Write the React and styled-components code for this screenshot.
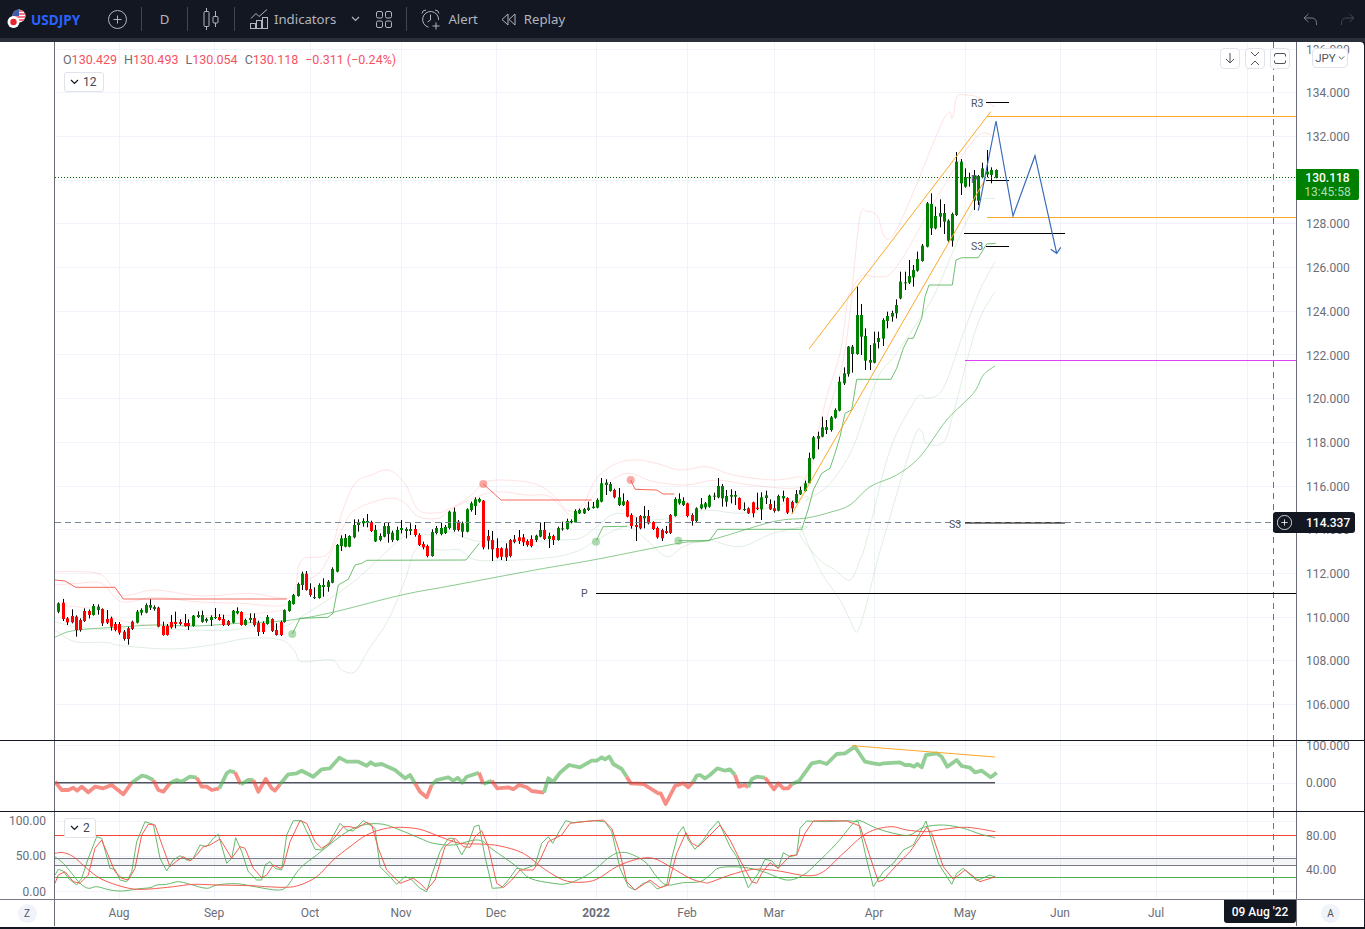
import styled, { createGlobalStyle } from "styled-components";

const UI_FONT = `"Noto Sans", "Liberation Sans", sans-serif`;
const NUM_FONT = `Roboto, "Liberation Sans", sans-serif`;

// helpers: the series below were read off crops, so they keep the crop's origin
const fromCrop = (x0, y0, pts) => pts.map(([x, y]) => [x0 + x / 3, y0 + y / 3]);

const candlesFromCrop = (x0, y0, rows) =>
  rows.map(([x, top, bottom, color, hi, lo]) => ({
    x: Math.round(x0 + x / 3),
    top: y0 + top / 3,
    bottom: y0 + bottom / 3,
    color,
    hi: hi === undefined ? undefined : y0 + hi / 3,
    lo: lo === undefined ? undefined : y0 + lo / 3,
  }));

const linePath = (pts) =>
  pts.map(([x, y], i) => `${i ? "L" : "M"}${x.toFixed(1)} ${y.toFixed(1)}`).join(" ");

const smoothPath = (pts) => {
  let d = `M${pts[0][0].toFixed(1)} ${pts[0][1].toFixed(1)}`;
  for (let i = 0; i < pts.length - 1; i++) {
    const p0 = pts[i - 1] || pts[i];
    const p1 = pts[i];
    const p2 = pts[i + 1];
    const p3 = pts[i + 2] || p2;
    const c1 = [p1[0] + (p2[0] - p0[0]) / 6, p1[1] + (p2[1] - p0[1]) / 6];
    const c2 = [p2[0] - (p3[0] - p1[0]) / 6, p2[1] - (p3[1] - p1[1]) / 6];
    d += ` C${c1[0].toFixed(1)} ${c1[1].toFixed(1)} ${c2[0].toFixed(1)} ${c2[1].toFixed(1)} ${p2[0].toFixed(1)} ${p2[1].toFixed(1)}`;
  }
  return d;
};

const noise = (i) => {
  const s = Math.sin(i * 12.9898) * 43758.5453;
  return s - Math.floor(s);
};

// [x, bodyTop, bodyBottom, colour, wickTop?, wickBottom?]
const candles = [
  ...candlesFromCrop(55, 470, [
    [10, 400, 425, "g"], [24, 398, 447, "r"], [37, 445, 457, "r"], [50, 438, 457, "r", 418, 460], [64, 440, 480, "r", 436, 500],
    [76, 450, 480, "r", 445, 485], [88, 423, 453, "r", 415, 456], [103, 423, 435, "r"], [115, 408, 435, "g", 402, 437], [128, 410, 420, "g", 403, 434],
    [142, 417, 460, "r", 415, 468], [155, 447, 458, "r", 420, 462], [167, 445, 470, "r", 440, 482], [181, 462, 480, "r", 456, 484], [193, 462, 488, "r", 456, 494],
    [206, 485, 507, "r", 480, 512], [220, 475, 507, "r", 470, 524], [232, 455, 477, "r", 452, 480], [245, 425, 458, "g", 420, 460], [259, 420, 428, "g", 415, 436],
    [272, 405, 428, "g", 400, 430], [284, 405, 413, "g", 388, 420], [298, 411, 417, "g", 406, 422], [310, 413, 470, "r", 410, 472], [323, 468, 495, "r", 455, 497],
    [337, 468, 495, "r", 462, 497], [349, 456, 472, "r", 435, 476], [361, 456, 462, "r", 425, 475], [376, 456, 462, "r", 448, 466], [389, 459, 468, "r", 432, 470],
    [400, 459, 468, "r", 448, 480], [415, 437, 468, "g", 435, 470], [428, 435, 441, "g", 424, 444], [440, 435, 456, "g", 422, 458], [454, 447, 453, "g", 443, 458],
    [467, 441, 450, "g", 436, 468], [479, 441, 444, "g", 414, 447], [493, 441, 450, "r", 432, 452], [505, 447, 465, "r", 434, 468], [518, 453, 465, "r", 450, 468],
    [533, 422, 458, "g", 420, 460], [545, 423, 430, "g", 412, 433], [557, 426, 465, "r", 424, 467], [571, 450, 465, "g", 446, 467], [584, 444, 450, "g", 430, 458],
    [598, 444, 465, "r", 430, 470], [610, 459, 486, "r", 452, 498], [623, 459, 486, "r", 454, 492], [637, 441, 462, "g", 435, 464], [650, 447, 483, "r", 445, 486],
    [662, 480, 495, "r", 460, 497], [677, 456, 495, "r", 452, 498], [688, 420, 456, "g", 418, 458], [701, 393, 423, "g", 390, 425], [715, 375, 402, "g", 372, 404],
    [728, 342, 378, "g", 338, 380], [740, 311, 345, "g", 305, 360], [754, 311, 360, "r", 303, 362], [766, 357, 375, "r", 340, 380], [778, 381, 384, "g", 352, 387],
    [793, 345, 384, "g", 340, 386], [805, 345, 351, "g", 325, 380], [818, 335, 351, "g", 330, 365], [832, 297, 338, "g", 292, 340], [845, 225, 305, "g", 222, 307],
    [857, 205, 228, "g", 196, 243], [870, 204, 230, "g", 192, 232], [883, 198, 230, "g", 196, 232], [896, 165, 202, "g", 148, 205], [910, 156, 165, "g", 148, 185],
    [923, 153, 160, "g", 145, 170], [936, 153, 159, "g", 132, 172], [949, 156, 183, "r", 152, 186], [961, 180, 214, "g", 165, 216], [974, 198, 210, "g", 190, 214],
    [988, 168, 200, "g", 158, 202], [1000, 168, 192, "g", 158, 218], [1012, 188, 210, "g", 182, 216], [1026, 180, 210, "g", 170, 212], [1039, 174, 180, "g", 150, 190],
    [1052, 177, 183, "g", 172, 205], [1066, 177, 183, "g", 160, 195], [1079, 177, 195, "r", 165, 200], [1091, 195, 225, "r", 190, 228], [1105, 222, 232, "r", 215, 238],
    [1117, 228, 258, "r", 224, 262], [1130, 186, 258, "g", 178, 260], [1144, 174, 189, "g", 168, 193], [1157, 174, 192, "g", 158, 196], [1170, 171, 189, "g", 165, 192],
    [1183, 125, 174, "g", 122, 178], [1196, 125, 180, "g", 113, 185],
  ]),
  ...candlesFromCrop(440, 460, [
    [54, 185, 210, "r", 180, 214], [67, 190, 215, "g", 185, 232], [80, 148, 215, "g", 145, 217], [92, 130, 150, "g", 125, 155], [105, 118, 138, "g", 112, 165],
    [118, 117, 125, "g", 113, 128], [130, 122, 262, "r", 120, 268], [145, 228, 242, "r", 210, 268], [157, 240, 268, "r", 213, 303], [170, 264, 292, "r", 235, 295],
    [184, 265, 290, "r", 262, 300], [197, 265, 292, "r", 250, 303], [209, 240, 288, "r", 237, 292], [222, 238, 246, "r", 225, 250], [236, 232, 243, "r", 210, 252],
    [248, 232, 247, "r", 222, 258], [262, 243, 255, "r", 238, 260], [274, 237, 258, "r", 226, 262], [287, 227, 240, "g", 224, 246], [301, 210, 230, "g", 186, 232],
    [313, 210, 237, "r", 186, 240], [328, 228, 237, "g", 218, 264], [340, 228, 240, "r", 224, 255], [353, 204, 240, "g", 200, 242], [367, 205, 208, "g", 185, 212],
    [380, 183, 207, "g", 176, 209], [393, 183, 187, "g", 178, 190], [406, 153, 187, "g", 148, 189], [418, 150, 160, "g", 146, 162], [431, 147, 160, "g", 144, 162],
    [445, 143, 150, "g", 125, 153], [458, 140, 144, "g", 126, 146], [470, 120, 143, "g", 115, 145], [483, 70, 125, "g", 54, 127], [497, 68, 75, "g", 58, 105],
    [509, 72, 93, "g", 66, 95], [523, 90, 112, "r", 86, 115], [536, 112, 135, "g", 84, 138], [549, 124, 135, "g", 100, 138], [562, 124, 170, "r", 120, 172],
    [574, 165, 198, "r", 160, 206], [587, 195, 201, "r", 172, 243], [601, 168, 205, "r", 165, 208], [613, 168, 175, "g", 138, 205], [625, 168, 190, "r", 150, 193],
    [640, 186, 207, "r", 184, 210], [652, 204, 232, "r", 200, 236], [665, 210, 235, "r", 206, 243], [679, 213, 219, "r", 198, 222], [691, 165, 219, "r", 162, 222],
    [704, 117, 168, "g", 112, 170], [717, 117, 130, "g", 100, 134], [730, 123, 135, "g", 112, 138], [742, 130, 168, "r", 128, 172], [757, 165, 183, "r", 160, 197],
    [769, 145, 183, "g", 142, 186], [782, 133, 145, "g", 114, 148], [796, 130, 142, "g", 126, 148], [808, 107, 140, "g", 104, 143], [821, 107, 110, "g", 98, 120],
    [835, 78, 112, "g", 54, 115], [847, 78, 115, "g", 72, 140], [859, 108, 125, "g", 90, 140], [873, 105, 110, "g", 88, 130], [886, 105, 110, "g", 93, 135],
    [898, 114, 148, "r", 112, 150], [912, 147, 150, "g", 127, 153], [925, 145, 160, "r", 142, 162], [939, 127, 160, "r", 125, 172], [951, 143, 147, "r", 98, 150],
    [964, 112, 148, "g", 97, 180], [978, 106, 114, "g", 92, 132], [991, 132, 148, "r", 118, 150], [1003, 145, 153, "r", 122, 158], [1015, 108, 152, "g", 104, 154],
    [1028, 108, 115, "g", 92, 125], [1042, 114, 158, "r", 112, 162], [1055, 126, 145, "r", 122, 160], [1068, 102, 128, "g", 90, 130], [1081, 90, 103, "g", 80, 105],
    [1094, 70, 93, "g", 62, 95], [1108, -6, 70, "g", -22, 72],
  ]),
  ...candlesFromCrop(780, 280, [
    [100, 472, 535, "g", 468, 538], [113, 468, 476, "g", 455, 508], [127, 442, 470, "g", 410, 472], [139, 441, 450, "g", 420, 462], [154, 412, 450, "g", 408, 455],
    [166, 390, 413, "g", 385, 416], [178, 305, 392, "g", 290, 394], [193, 280, 310, "g", 262, 315], [205, 200, 282, "g", 198, 290], [217, 200, 222, "g", 195, 278],
    [232, 105, 222, "g", 20, 224], [244, 105, 170, "g", 72, 225], [256, 168, 242, "g", 145, 270], [271, 240, 248, "g", 195, 270], [283, 190, 248, "g", 155, 250],
    [295, 174, 186, "g", 155, 205], [310, 120, 176, "g", 115, 198], [322, 108, 123, "g", 95, 145], [335, 99, 110, "g", 92, 125], [349, 75, 100, "g", 58, 115],
  ]),
  ...candlesFromCrop(780, 90, [
    [361, 575, 625, "g", 545, 628], [375, 577, 578, "g", 545, 600], [388, 558, 578, "g", 510, 582], [400, 540, 562, "g", 525, 590], [412, 507, 542, "g", 485, 545],
    [427, 467, 513, "g", 462, 515], [440, 340, 470, "g", 336, 472], [452, 342, 415, "g", 310, 435], [466, 378, 415, "g", 350, 418], [479, 369, 380, "g", 328, 412],
    [491, 369, 395, "g", 342, 432], [505, 392, 452, "g", 388, 455], [517, 372, 452, "g", 368, 470], [529, 215, 375, "g", 186, 378], [544, 215, 280, "g", 207, 315],
    [556, 262, 290, "g", 235, 293], [568, 262, 264, "g", 248, 290], [582, 258, 332, "g", 240, 360], [595, 258, 332, "g", 255, 345], [607, 235, 262, "g", 218, 265],
    [622, 245, 253, "g", 180, 262], [634, 240, 255, "g", 232, 280], [647, 240, 263, "g", 238, 265],
  ]),
];

const pinkOuter = [
  ...fromCrop(55, 470, [[0, 305], [70, 305], [140, 315], [200, 375], [300, 360], [440, 378], [580, 370], [690, 385], [720, 360], [740, 270], [820, 250], [860, 130], [900, 40], [950, 15], [1000, 0], [1050, 40], [1090, 120], [1150, 128]]),
  ...fromCrop(440, 460, [[20, 150], [60, 130], [100, 100], [130, 70], [180, 60], [280, 70], [340, 105], [380, 150], [425, 140], [470, 55], [530, 10], [590, 0], [650, 10], [720, 30], [800, 20], [880, 45], [1000, 60], [1080, 50]]),
  ...fromCrop(780, 280, [[75, 595], [100, 520], [140, 350], [180, 220], [205, 50]]),
  ...fromCrop(780, 90, [[215, 600], [240, 380], [262, 365], [290, 375], [340, 435], [490, 90], [517, 85], [530, 20], [555, 15], [590, 20], [645, 50]]),
];

const pinkInner = [
  ...fromCrop(55, 470, [[0, 345], [70, 340], [140, 340], [200, 395], [300, 382], [420, 395], [560, 400], [690, 405], [740, 340], [800, 300], [860, 180], [900, 120], [1000, 85], [1050, 100], [1090, 140], [1150, 145]]),
  ...fromCrop(440, 460, [[30, 150], [100, 115], [170, 95], [260, 105], [330, 110], [400, 170], [450, 120], [480, 85], [560, 40], [640, 65], [740, 75], [830, 60], [930, 75], [1060, 85]]),
  ...fromCrop(780, 280, [[75, 603], [110, 510], [150, 380], [190, 240], [215, 60]]),
  ...fromCrop(780, 90, [[220, 590], [250, 555], [290, 560], [350, 530], [490, 290], [590, 140], [645, 140]]),
];

const pinkLow = fromCrop(55, 470, [[0, 405], [60, 410], [140, 420], [190, 450], [300, 465], [420, 440], [560, 435], [690, 420]]);

const paleUpper = [
  ...fromCrop(55, 470, [[0, 455], [60, 470], [140, 478], [250, 475], [400, 480], [530, 480], [600, 465], [680, 470], [740, 440], [890, 340], [1000, 240], [1060, 195], [1150, 195]]),
  ...fromCrop(440, 460, [[30, 215], [80, 235], [130, 245], [250, 245], [350, 240], [420, 235], [470, 200], [530, 160], [620, 180], [720, 170], [800, 150], [900, 160], [1000, 140], [1100, 110]]),
  ...fromCrop(780, 280, [[80, 660], [150, 610], [220, 500], [290, 300], [350, 220], [430, 100]]),
  ...fromCrop(780, 90, [[470, 600], [530, 460], [590, 340], [645, 325]]),
];

const paleMid = [
  ...fromCrop(55, 470, [[0, 480], [60, 515], [150, 517], [200, 527], [350, 537], [470, 525], [580, 505], [680, 510], [720, 545], [740, 575], [830, 570], [860, 600], [900, 605], [940, 540], [1000, 450], [1050, 330], [1085, 235], [1150, 240]]),
  ...fromCrop(440, 460, [[30, 270], [60, 270], [110, 300], [230, 300], [350, 290], [420, 270], [470, 240], [560, 200], [620, 240], [680, 290], [730, 260], [800, 240], [900, 260], [1000, 220], [1100, 200]]),
  [800, 535], [820, 560], [835, 570], [850, 580], [860, 560],
  ...fromCrop(780, 280, [[260, 780], [330, 510], [400, 370], [425, 345], [440, 355], [490, 325], [550, 160], [600, 30], [615, 0]]),
  [995, 262],
];

const paleLow = [
  [800, 525], [820, 570], [840, 600], [850, 620], [857, 632], [865, 610], [875, 570],
  ...fromCrop(780, 280, [[310, 780], [400, 480], [425, 455], [440, 490], [490, 487], [520, 400], [590, 140], [645, 35]]),
];

const maLine = [
  ...fromCrop(55, 470, [[0, 502], [40, 485], [100, 477], [180, 472], [300, 465], [420, 468], [550, 460], [690, 452], [820, 430], [1040, 375], [1200, 345]]),
  [535, 570], [596.7, 559.3], [678.3, 543.3], [710, 540], [773, 521.7], [806.7, 518],
  ...fromCrop(780, 280, [[150, 697], [210, 675], [270, 620], [350, 585], [420, 530], [500, 420], [580, 340], [610, 285], [645, 258]]),
];

const stepSegments = [
  { color: "#f44336", pts: [[55, 580], [65, 581], [75.7, 587.3], [115, 587.3], [123.3, 599], [286.7, 599]] },
  { color: "#4caf50", pts: [[292.3, 634], [300, 618.3], [327.7, 617.3], [333, 613.3], [338.3, 585], [348.3, 579.3], [355, 565], [361.7, 563.3], [366.7, 560.3], [466, 560], [479.3, 543.3]] },
  { color: "#f44336", pts: [[483.3, 484], [501, 500], [591.7, 500]] },
  { color: "#4caf50", pts: [[596.7, 540], [603, 526.7], [627.3, 526.3]] },
  { color: "#f44336", pts: [[630.7, 480], [635, 489.3], [656.7, 490], [663, 494], [674.3, 494]] },
  {
    color: "#4caf50",
    pts: [[678.3, 540.7], [709.3, 540.7], [717.7, 529.3], [801.7, 529.3], [808, 510], [813.3, 490], [821.7, 473.3], [830, 468.3], [835, 453.3], [840, 436.7], [845, 413.3], [851.7, 410], [856.7, 379.3], [891, 379.3], [896.7, 368.3], [903.3, 348.3], [908.3, 338.3], [913.3, 338.3], [921.7, 318.3], [925, 296.7], [929, 285], [952.3, 285], [956, 260], [961.7, 257.7], [978.3, 257.7], [986.7, 244], [995.7, 243.3]],
  },
];

const markers = [
  { x: 292.3, y: 634, color: "#4caf50" },
  { x: 483.3, y: 484, color: "#f44336" },
  { x: 596, y: 541.7, color: "#4caf50" },
  { x: 630.7, y: 480, color: "#f44336" },
  { x: 678.3, y: 540.7, color: "#4caf50" },
];

const rsi = [
  ...fromCrop(0, 735, [[165, 140], [185, 165], [205, 165], [220, 158], [232, 167], [245, 155], [265, 172], [285, 155], [310, 160], [335, 150], [350, 162], [370, 178], [395, 143], [425, 122], [440, 125], [460, 135], [475, 165], [490, 170], [510, 145], [530, 135], [545, 140], [570, 125], [590, 128], [605, 155], [620, 155], [635, 165], [658, 160], [680, 115], [690, 108], [705, 112], [722, 148], [745, 135], [760, 135], [775, 170], [797, 132], [815, 160], [825, 167], [840, 148], [865, 118], [890, 115], [905, 107], [940, 125], [965, 103], [990, 100], [1018, 68], [1040, 80], [1075, 80], [1100, 92], [1112, 82], [1125, 90], [1145, 87], [1185, 105], [1215, 130], [1230, 120], [1245, 145]]),
  ...fromCrop(420, 740, [[0, 155], [20, 172], [35, 135], [50, 120], [85, 112], [100, 122], [113, 113], [127, 128], [140, 110], [177, 98], [190, 132], [215, 122], [232, 145], [265, 142], [280, 148], [297, 135], [320, 142], [335, 153], [372, 158], [385, 115], [400, 125], [420, 98], [447, 75], [480, 82], [515, 62], [530, 62], [545, 52], [555, 58], [568, 50], [580, 72], [605, 87], [620, 110], [632, 130], [670, 132], [715, 160], [722, 160], [737, 192], [765, 138], [790, 130], [805, 142], [820, 125], [830, 107], [840, 105], [855, 115]]),
  ...fromCrop(710, 740, [[0, 105], [22, 85], [45, 92], [60, 88], [75, 105], [87, 140], [105, 135], [115, 142], [125, 118], [140, 110], [165, 113], [192, 148], [205, 130], [220, 145], [235, 145], [245, 133], [268, 122], [305, 70], [330, 65], [350, 72], [380, 42], [405, 40], [435, 20], [465, 65], [490, 70], [510, 73], [520, 70], [570, 67], [585, 75], [600, 75], [612, 80], [622, 72], [635, 82], [648, 45], [680, 40], [695, 50], [712, 80], [740, 60], [755, 78], [780, 83], [795, 97], [815, 92], [842, 112], [860, 98]]),
];

const rsiRedRanges = [[55, 132], [153, 170], [197, 219], [235, 241], [253, 265], [266, 278], [415, 432], [479, 483], [492, 544], [627, 692], [735, 748], [765, 792]];

const isRsiRed = (x) => rsiRedRanges.some(([a, b]) => x >= a && x < b);

const rsiRuns = rsi.reduce((runs, pt, i) => {
  if (i === 0) return runs;
  const prev = rsi[i - 1];
  const red = isRsiRed((prev[0] + pt[0]) / 2);
  const last = runs[runs.length - 1];
  if (last && last.red === red) last.pts.push(pt);
  else runs.push({ red, pts: [prev, pt] });
  return runs;
}, []);

const stochGreenFast = [
  ...fromCrop(0, 735, [[165, 420], [175, 403], [190, 408], [205, 430], [230, 450], [245, 430], [265, 370], [290, 305], [305, 310], [330, 400], [345, 403], [360, 435], [380, 440], [395, 410], [410, 320], [435, 260], [460, 268], [480, 370], [500, 408], [520, 375], [540, 362], [560, 375], [580, 370], [600, 330], [620, 335], [640, 310], [655, 298], [680, 385], [695, 370], [707, 308], [725, 350], [745, 410], [770, 435], [785, 435], [795, 390], [810, 380], [825, 400], [845, 405], [860, 300], [880, 257], [905, 257], [930, 310], [945, 343], [965, 345], [990, 320], [1020, 265], [1040, 285], [1060, 288], [1090, 257], [1110, 270], [1125, 280], [1140, 395], [1170, 425], [1190, 448], [1215, 425], [1230, 430]]),
  ...fromCrop(420, 740, [[0, 445], [20, 455], [35, 405], [60, 335], [85, 295], [100, 295], [125, 345], [145, 310], [163, 260], [177, 255], [195, 350], [217, 445], [245, 443], [265, 420], [290, 385], [310, 388], [345, 375], [365, 310], [385, 290], [398, 310], [420, 270], [437, 242], [460, 248], [520, 242], [555, 245], [575, 275], [600, 385], [625, 440], [645, 450], [670, 430], [690, 425], [712, 447], [740, 435], [755, 355], [775, 280], [790, 260], [805, 300], [825, 328], [850, 300]]),
  ...fromCrop(710, 740, [[0, 270], [25, 243], [60, 320], [80, 350], [115, 443], [145, 400], [165, 358], [185, 362], [205, 385], [220, 338], [240, 350], [260, 345], [270, 265], [290, 243], [350, 245], [410, 242], [445, 245], [470, 360], [490, 440], [520, 395], [550, 370], [580, 330], [610, 315], [648, 243], [685, 370], [725, 433], [740, 400], [760, 385], [800, 422], [840, 405], [856, 412]]),
];

const stochRedFast = [
  ...fromCrop(0, 735, [[165, 445], [175, 420], [195, 410], [220, 440], [240, 445], [265, 420], [285, 340], [305, 315], [320, 350], [345, 410], [365, 430], [385, 435], [405, 400], [425, 300], [445, 268], [465, 270], [490, 340], [510, 395], [530, 378], [550, 365], [570, 378], [590, 360], [610, 335], [630, 330], [660, 312], [680, 345], [695, 370], [720, 335], [735, 340], [760, 400], [785, 428], [800, 420], [820, 390], [840, 400], [850, 395], [870, 320], [900, 257], [920, 265], [945, 320], [965, 340], [990, 325], [1030, 275], [1050, 275], [1070, 280], [1100, 262], [1115, 270], [1135, 340], [1160, 405], [1200, 445], [1240, 430]]),
  ...fromCrop(420, 740, [[0, 430], [20, 450], [45, 420], [75, 320], [105, 295], [130, 320], [150, 322], [165, 290], [185, 272], [205, 320], [230, 430], [250, 443], [275, 420], [300, 390], [340, 390], [360, 360], [385, 305], [425, 285], [450, 250], [490, 245], [550, 240], [575, 265], [600, 340], [620, 425], [645, 450], [690, 420], [720, 443], [745, 435], [770, 340], [798, 278], [815, 310], [835, 320]]),
  ...fromCrop(710, 740, [[0, 285], [30, 255], [60, 300], [90, 360], [125, 425], [140, 430], [155, 400], [180, 368], [205, 385], [240, 347], [260, 345], [285, 280], [310, 243], [350, 242], [410, 243], [450, 258], [480, 350], [505, 425], [520, 420], [560, 375], [600, 335], [650, 262], [665, 280], [700, 380], [730, 418], [765, 390], [810, 425], [856, 410]]),
];

const stochGreenSlow = [
  ...fromCrop(0, 735, [[165, 365], [190, 385], [215, 415], [240, 445], [265, 460], [290, 455], [330, 465], [370, 468], [410, 462], [450, 458], [470, 450], [500, 448], [535, 440], [570, 448], [620, 460], [650, 450], [710, 446], [770, 456], [830, 465], [860, 455], [900, 400], [950, 360], [1000, 320], [1050, 285], [1100, 268], [1150, 268], [1200, 285]]),
  ...fromCrop(420, 740, [[0, 295], [40, 310], [100, 315], [175, 300], [220, 330], [290, 380], [330, 415], [400, 430], [445, 430], [510, 400], [570, 350], [605, 337], [640, 345], [680, 370], [710, 410], [740, 435], [790, 428], [840, 425]]),
  ...fromCrop(710, 740, [[0, 405], [30, 383], [100, 382], [160, 395], [230, 420], [280, 405], [320, 370], [380, 310], [430, 250], [450, 242], [500, 265], [560, 282], [600, 285], [640, 262], [700, 255], [760, 265], [810, 282], [856, 293]]),
];

const stochRedSlow = [
  ...fromCrop(0, 735, [[165, 355], [190, 353], [220, 365], [260, 400], [300, 430], [350, 450], [400, 462], [450, 462], [520, 455], [580, 448], [650, 450], [750, 452], [800, 455], [860, 457], [900, 450], [950, 425], [1000, 375], [1050, 335], [1100, 300], [1150, 282], [1200, 277]]),
  ...fromCrop(420, 740, [[0, 268], [60, 290], [120, 310], [180, 312], [240, 318], [310, 340], [370, 385], [430, 420], [480, 427], [530, 418], [590, 380], [650, 358], [700, 355], [750, 380], [810, 415], [850, 427]]),
  ...fromCrop(710, 740, [[0, 427], [60, 405], [130, 388], [200, 392], [290, 407], [340, 395], [400, 340], [470, 280], [540, 260], [590, 270], [650, 275], [700, 268], [770, 262], [856, 275]]),
];

const gridX = [119, 214, 310, 401, 496, 596, 687, 774, 874, 965, 1060, 1156, 1247];
const prices = [136, 134, 132, 130, 128, 126, 124, 122, 120, 118, 116, 114, 112, 110, 108, 106];
const PRICE_STEP = 43.7;
const priceY = (i) => Math.round(48.5 + i * PRICE_STEP) + 0.5;

const months = [
  { label: "Aug", gap: 64 },
  { label: "Sep", gap: 95 },
  { label: "Oct", gap: 96 },
  { label: "Nov", gap: 91 },
  { label: "Dec", gap: 95 },
  { label: "2022", gap: 100, bold: true },
  { label: "Feb", gap: 91 },
  { label: "Mar", gap: 87 },
  { label: "Apr", gap: 100 },
  { label: "May", gap: 91 },
  { label: "Jun", gap: 95 },
  { label: "Jul", gap: 96 },
];

const GlobalStyle = createGlobalStyle`
  html, body {
    margin: 0;
    padding: 0;
    background: #131722;
  }
  * {
    box-sizing: border-box;
  }
`;

const Page = styled.div`
  width: 1365px;
  height: 929px;
  background: #131722;
  overflow: hidden;
  font-family: ${UI_FONT};
`;

const TopBar = styled.div`
  height: 38px;
  display: flex;
  align-items: center;
  color: #b2b5be;
  font-size: 13.2px;
  padding-right: 10px;
`;

const Strip = styled.div`
  height: 4px;
  background: #2a2e39;
`;

const Symbol = styled.div`
  width: 97px;
  padding-left: 7px;
  display: flex;
  align-items: center;
  gap: 5px;
  color: #2962ff;
  font-weight: 700;
  font-size: 13.6px;
`;

const Slot = styled.div`
  width: ${(p) => p.$w}px;
  height: 24px;
  display: flex;
  align-items: center;
  justify-content: center;
`;

const Divider = styled.div`
  width: 1px;
  height: 24px;
  background: #434651;
  margin-left: ${(p) => p.$ml || 0}px;
`;

const ToolText = styled.div`
  display: flex;
  align-items: center;
  gap: ${(p) => p.$gap}px;
  margin-left: ${(p) => p.$ml}px;
`;

const RightTools = styled.div`
  margin-left: auto;
  display: flex;
  align-items: center;
  gap: 24px;
`;

const ChartArea = styled.div`
  width: 1364px;
  height: 885px;
  background: #fff;
  border-radius: 0 4px 0 0;
  overflow: hidden;
`;

const Row = styled.div`
  position: relative;
  display: grid;
  grid-template-columns: 55px 1241px 68px;
  height: ${(p) => p.$h}px;
  border-top: ${(p) => (p.$line ? `1px solid ${p.$line}` : "none")};
`;

const Gutter = styled.div`
  border-right: 1px solid #6a6d78;
  overflow: hidden;
  text-align: right;
  color: #6a6d78;
  font-family: ${NUM_FONT};
  font-size: 12px;
  padding-right: 8px;
`;

const Axis = styled.div`
  border-left: 1px solid #6a6d78;
  overflow: hidden;
  color: #6a6d78;
  font-family: ${NUM_FONT};
  font-size: 12px;
  padding-left: 9px;
`;

const Ticks = styled.div`
  margin-top: ${(p) => p.$top}px;
`;

const Tick = styled.div`
  height: ${(p) => p.$h}px;
  line-height: ${(p) => p.$h}px;
  white-space: nowrap;
`;

const Pane = styled.div`
  position: relative;
  overflow: hidden;
`;

const ChartSvg = styled.svg`
  display: block;
`;

const SvgLabel = styled.text`
  font-family: ${NUM_FONT};
  font-size: 10.5px;
  fill: #50535e;
`;

const Legend = styled.div`
  position: absolute;
  left: 8px;
  top: 10px;
  display: flex;
  flex-direction: column;
  align-items: flex-start;
  gap: 5px;
  font-family: ${NUM_FONT};
  font-size: 12.5px;
`;

const OhlcLine = styled.div`
  display: flex;
  gap: 7px;
  color: #f7525f;
  white-space: nowrap;
`;

const OhlcKey = styled.span`
  color: #6a6d78;
`;

const Collapse = styled.div`
  height: 20px;
  display: flex;
  align-items: center;
  gap: 4px;
  margin-left: 1px;
  padding: 0 ${(p) => p.$pad}px 0 5px;
  border: 1px solid #e0e3eb;
  border-radius: 3px;
  background: #fff;
  font-family: ${NUM_FONT};
  font-size: 12px;
  color: #434651;
`;

const Collapsed = styled.div`
  position: absolute;
  left: 8px;
  top: 6px;
`;

const PaneTools = styled.div`
  position: absolute;
  top: 6px;
  right: 6px;
  display: flex;
  gap: 5px;
`;

const PaneButton = styled.div`
  width: 20px;
  height: 21px;
  display: flex;
  align-items: center;
  justify-content: center;
  border: 1px solid #e0e3eb;
  border-radius: 4px;
  background: #fff;
`;

const UnitButton = styled.div`
  position: absolute;
  top: 6px;
  left: 1312px;
  width: 36px;
  height: 20px;
  display: flex;
  align-items: center;
  justify-content: center;
  gap: 2px;
  background: #fff;
  border: 1px solid #e0e3eb;
  border-radius: 4px;
  font-family: ${NUM_FONT};
  font-size: 11.5px;
  color: #50535e;
`;

const LastPriceTag = styled.div`
  position: absolute;
  left: 1296px;
  top: 127px;
  width: 63px;
  height: 31px;
  background: #008000;
  border-radius: 0 2px 2px 0;
  display: flex;
  flex-direction: column;
  align-items: center;
  justify-content: center;
  font-family: ${NUM_FONT};
  font-size: 12px;
  line-height: 14px;
  color: #fff;
  font-weight: 500;
`;

const Countdown = styled.span`
  color: #b4dcb4;
  font-weight: 400;
`;

const CursorTag = styled.div`
  position: absolute;
  left: 1273px;
  top: 470px;
  height: 21px;
  display: flex;
  align-items: center;
  background: #131722;
  border-radius: 3px;
  color: #fff;
  font-family: ${NUM_FONT};
  font-size: 12px;
  font-weight: 500;
`;

const CursorPlus = styled.div`
  width: 23px;
  display: flex;
  justify-content: center;
`;

const CursorPrice = styled.div`
  width: 59px;
  padding-left: 10px;
`;

const TimeTrack = styled.div`
  position: relative;
  display: flex;
  align-items: center;
  height: 26px;
  font-family: ${NUM_FONT};
  font-size: 12px;
  color: #6a6d78;
`;

const TimeTick = styled.div`
  width: 0;
  margin-left: ${(p) => p.$gap}px;
  display: flex;
  justify-content: center;
  white-space: nowrap;
  font-weight: ${(p) => (p.$bold ? 700 : 400)};
`;

const DateTag = styled.div`
  position: absolute;
  right: 0;
  top: 0;
  width: 72px;
  height: 23px;
  display: flex;
  align-items: center;
  justify-content: center;
  background: #131722;
  border-radius: 0 0 3px 3px;
  color: #fff;
  font-weight: 500;
`;

const CornerCell = styled.div`
  display: flex;
  align-items: center;
  justify-content: center;
  height: 26px;
  border-right: ${(p) => (p.$side === "left" ? "1px solid #6a6d78" : "none")};
  border-left: ${(p) => (p.$side === "right" ? "1px solid #6a6d78" : "none")};
`;

const RoundLetter = styled.div`
  width: 19px;
  height: 19px;
  border-radius: 50%;
  background: #f0f3fa;
  color: #50535e;
  display: flex;
  align-items: center;
  justify-content: center;
  font-family: ${NUM_FONT};
  font-size: 10px;
`;

const LogoIcon = () => (
  <svg width="19" height="20" viewBox="0 0 19 20">
    <defs>
      <clipPath id="flag">
        <circle cx="12" cy="7" r="6.5" />
      </clipPath>
    </defs>
    <g clipPath="url(#flag)">
      <rect x="5" y="0" width="15" height="14" fill="#fff" />
      <path d="M5 2h15M5 5h15M5 8h15M5 11h15" stroke="#f0455a" strokeWidth="1.4" />
      <rect x="5" y="0" width="7" height="7" fill="#3c5ea8" />
    </g>
    <circle cx="6.5" cy="13" r="6" fill="#fff" />
    <circle cx="6.5" cy="13" r="3.2" fill="#e8252f" />
  </svg>
);

const PlusCircleIcon = ({ size = 19, color = "#b2b5be" }) => (
  <svg width={size} height={size} viewBox="0 0 19 19" fill="none" stroke={color}>
    <circle cx="9.5" cy="9.5" r="9" />
    <path d="M9.5 5.5v8M5.5 9.5h8" />
  </svg>
);

const CandlesIcon = () => (
  <svg width="16" height="22" viewBox="0 0 16 22" fill="none" stroke="#b2b5be">
    <path d="M3.5 0v3M3.5 19v3M12.5 3v5M12.5 15v4" />
    <rect x="1" y="3.5" width="5" height="15" rx="1" />
    <rect x="10" y="8.5" width="5" height="6.5" rx="1" />
  </svg>
);

const IndicatorsIcon = () => (
  <svg width="19" height="20" viewBox="0 0 19 20" fill="none" stroke="#b2b5be">
    <path d="M1 9.5l5-5 3 3 8-7" />
    <rect x="0.5" y="14.5" width="5" height="5" />
    <rect x="6.5" y="11.5" width="5" height="8" />
    <rect x="12.5" y="8.5" width="5" height="11" />
  </svg>
);

const ChevronIcon = ({ color = "#b2b5be", w = 9 }) => (
  <svg width={w} height="6" viewBox="0 0 9 6" fill="none" stroke={color} strokeWidth="1.2">
    <path d="M1 1l3.5 3.5L8 1" />
  </svg>
);

const LayoutIcon = () => (
  <svg width="16" height="17" viewBox="0 0 16 17" fill="none" stroke="#b2b5be">
    <rect x="0.5" y="0.5" width="6" height="6.5" rx="1.5" />
    <rect x="9.5" y="0.5" width="6" height="6.5" rx="1.5" />
    <rect x="0.5" y="10" width="6" height="6.5" rx="1.5" />
    <rect x="9.5" y="10" width="6" height="6.5" rx="1.5" />
  </svg>
);

const AlertIcon = () => (
  <svg width="20" height="21" viewBox="0 0 20 21" fill="none" stroke="#b2b5be">
    <path d="M7.5 18.2A8 8 0 1 1 17.6 11" />
    <path d="M9.5 5.5V11l-3 2" />
    <path d="M1 4.5A4 4 0 0 1 5 1M14 1a4 4 0 0 1 4 3.5" />
    <path d="M15 13.5v7M11.5 17h7" />
  </svg>
);

const ReplayIcon = () => (
  <svg width="15" height="13" viewBox="0 0 15 13" fill="none" stroke="#b2b5be">
    <path d="M7 1L1 6.5 7 12M14 1L8 6.5 14 12" />
    <path d="M7 1v11M14 1v11" />
  </svg>
);

const UndoIcon = () => (
  <svg width="14" height="12" viewBox="0 0 14 12" fill="none" stroke="#787b86">
    <path d="M5.5 1L1 5l4.5 4" />
    <path d="M1 5h8a4.5 4.5 0 0 1 4.5 4.5V12" />
  </svg>
);

const RedoIcon = () => (
  <svg width="14" height="12" viewBox="0 0 14 12" fill="none" stroke="#434651">
    <path d="M8.5 1L13 5 8.5 9" />
    <path d="M13 5H5A4.5 4.5 0 0 0 .5 9.5V12" />
  </svg>
);

const ArrowDownIcon = () => (
  <svg width="10" height="11" viewBox="0 0 10 11" fill="none" stroke="#50535e">
    <path d="M5 0v10M1 6l4 4 4-4" />
  </svg>
);

const CollapseIcon = () => (
  <svg width="10" height="13" viewBox="0 0 10 13" fill="none" stroke="#50535e">
    <path d="M1 0l4 4 4-4M1 13l4-4 4 4" />
  </svg>
);

const FullscreenIcon = () => (
  <svg width="12" height="11" viewBox="0 0 12 11" fill="none" stroke="#50535e">
    <path d="M0.5 3.5V2A1.5 1.5 0 0 1 2 .5h8A1.5 1.5 0 0 1 11.5 2v1.5M.5 7.5V9A1.5 1.5 0 0 0 2 10.5h8A1.5 1.5 0 0 0 11.5 9V7.5" />
  </svg>
);

const GridLines = ({ ys, top, bottom }) => (
  <g stroke="#f0f3fa" strokeWidth="1">
    {gridX.map((x) => (
      <line key={x} x1={x + 0.5} x2={x + 0.5} y1={top} y2={bottom} />
    ))}
    {ys.map((y) => (
      <line key={y} x1="55" x2="1296" y1={y} y2={y} />
    ))}
  </g>
);

const CursorLine = ({ top, bottom }) => (
  <line x1="1273.5" x2="1273.5" y1={top} y2={bottom} stroke="#6a7685" strokeDasharray="6 5" />
);

const CandleSeries = () => (
  <g>
    {candles.map((c, i) => (
      <g key={i}>
        <line
          x1={c.x + 0.5}
          x2={c.x + 0.5}
          y1={c.hi ?? c.top - 1 - noise(i) * 3}
          y2={c.lo ?? c.bottom + 1 + noise(i + 7) * 3}
          stroke="#000"
        />
        <rect
          x={c.x - 1}
          y={c.top}
          width="3"
          height={Math.max(c.bottom - c.top, 1)}
          fill={c.color === "g" ? "#008000" : "#ff0000"}
        />
      </g>
    ))}
  </g>
);

const PricePaneChart = () => (
  <ChartSvg width="1241" height="698" viewBox="55 42 1241 698">
    <GridLines ys={prices.map((_, i) => priceY(i))} top="42" bottom="740" />
    <g fill="none" strokeWidth="1">
      <path d={smoothPath(pinkOuter)} stroke="#ff5252" opacity="0.17" />
      <path d={smoothPath(pinkInner)} stroke="#ff5252" opacity="0.17" />
      <path d={smoothPath(pinkLow)} stroke="#ff5252" opacity="0.15" />
      <path d={smoothPath(paleUpper)} stroke="#388e3c" opacity="0.15" />
      <path d={smoothPath(paleMid)} stroke="#388e3c" opacity="0.15" />
      <path d={smoothPath(paleLow)} stroke="#388e3c" opacity="0.15" />
      <path d={smoothPath(maLine)} stroke="#4caf50" opacity="0.65" />
      {stepSegments.map((s, i) => (
        <path key={i} d={linePath(s.pts)} stroke={s.color} opacity="0.8" />
      ))}
    </g>
    {markers.map((m) => (
      <circle key={m.x} cx={m.x} cy={m.y} r="4" fill={m.color} opacity="0.45" />
    ))}
    <CandleSeries />
    <line x1="55" x2="1296" y1="177.5" y2="177.5" stroke="#006400" strokeDasharray="1 2" />
    <line x1="55" x2="1273" y1="522.5" y2="522.5" stroke="#758696" strokeDasharray="6 4" />
    <CursorLine top="42" bottom="740" />
    <g stroke="#ffa726" fill="none">
      <path d="M809 349L990.7 111.7" />
      <path d="M791.7 514.3L986 178" />
      <line x1="987" x2="1296" y1="116.5" y2="116.5" />
      <line x1="987" x2="1296" y1="217.5" y2="217.5" />
    </g>
    <path d="M965 360.5H1296" stroke="#e040fb" />
    <g stroke="#000">
      <path d="M986 102.5H1009M986 180.5H1009M986 246.5H1009" />
      <path d="M964 233.5H1065M965 523H1065M596 593.5H1296" />
    </g>
    <SvgLabel x="971" y="107">R3</SvgLabel>
    <SvgLabel x="971" y="250">S3</SvgLabel>
    <SvgLabel x="971" y="183">P</SvgLabel>
    <SvgLabel x="949" y="528">S3</SvgLabel>
    <SvgLabel x="581" y="597">P</SvgLabel>
    <g stroke="#3b6cb7" fill="none" strokeWidth="1.2">
      <path d="M978.3 210.7L996 121L1013 216L1035 155.7L1056.7 253.3" />
      <path d="M1050.7 249.3L1056.7 253.3L1060.7 247.3" />
    </g>
  </ChartSvg>
);

const RsiPaneChart = () => (
  <ChartSvg width="1241" height="70" viewBox="55 741 1241 70">
    <GridLines ys={[745.5, 783.5]} top="741" bottom="811" />
    <line x1="55" x2="995" y1="782.7" y2="782.7" stroke="#50535e" strokeWidth="1.4" />
    <g fill="none" strokeWidth="3.8" strokeLinejoin="round" opacity="0.6">
      {rsiRuns.map((run, i) => (
        <path key={i} d={linePath(run.pts)} stroke={run.red ? "#f44336" : "#4caf50"} />
      ))}
    </g>
    <path d="M852 745.7L995 757" stroke="#ffa726" />
    <CursorLine top="741" bottom="811" />
  </ChartSvg>
);

const StochPaneChart = () => (
  <ChartSvg width="1241" height="87" viewBox="55 812 1241 87">
    <GridLines ys={[821.5, 856.5, 891.5]} top="812" bottom="899" />
    <rect x="55" y="858" width="1241" height="7.5" fill="#787b86" opacity="0.08" />
    <g stroke="#787b86" strokeWidth="1">
      <line x1="55" x2="1296" y1="858.5" y2="858.5" />
      <line x1="55" x2="1296" y1="865.5" y2="865.5" />
    </g>
    <line x1="55" x2="1296" y1="835.5" y2="835.5" stroke="#f44336" />
    <line x1="55" x2="1296" y1="877.5" y2="877.5" stroke="#4caf50" />
    <g fill="none" opacity="0.85">
      <path d={linePath(stochGreenFast)} stroke="#4caf50" strokeLinejoin="round" />
      <path d={smoothPath(stochGreenSlow)} stroke="#4caf50" />
      <path d={smoothPath(stochRedSlow)} stroke="#f44336" />
      <path d={linePath(stochRedFast)} stroke="#f44336" strokeLinejoin="round" />
    </g>
    <CursorLine top="812" bottom="899" />
  </ChartSvg>
);

const App = () => (
  <Page>
    <GlobalStyle />
    <TopBar>
      <Symbol>
        <LogoIcon />
        USDJPY
      </Symbol>
      <Slot $w={41}>
        <PlusCircleIcon />
      </Slot>
      <Divider $ml={3} />
      <Slot $w={45}>D</Slot>
      <Divider />
      <Slot $w={46}>
        <CandlesIcon />
      </Slot>
      <Divider />
      <ToolText $gap={5} $ml={15}>
        <IndicatorsIcon />
        Indicators
      </ToolText>
      <Slot $w={38}>
        <ChevronIcon />
      </Slot>
      <Slot $w={20}>
        <LayoutIcon />
      </Slot>
      <Divider $ml={12} />
      <ToolText $gap={7} $ml={14}>
        <AlertIcon />
        Alert
      </ToolText>
      <ToolText $gap={8} $ml={23}>
        <ReplayIcon />
        Replay
      </ToolText>
      <RightTools>
        <UndoIcon />
        <RedoIcon />
      </RightTools>
    </TopBar>
    <Strip />
    <ChartArea>
      <Row $h={698}>
        <Gutter />
        <Pane>
          <PricePaneChart />
          <Legend>
            <OhlcLine>
              <span>
                <OhlcKey>O</OhlcKey>130.429
              </span>
              <span>
                <OhlcKey>H</OhlcKey>130.493
              </span>
              <span>
                <OhlcKey>L</OhlcKey>130.054
              </span>
              <span>
                <OhlcKey>C</OhlcKey>130.118
              </span>
              <span>−0.311 (−0.24%)</span>
            </OhlcLine>
            <Collapse $pad={6}>
              <ChevronIcon color="#131722" />
              12
            </Collapse>
          </Legend>
          <PaneTools>
            <PaneButton>
              <ArrowDownIcon />
            </PaneButton>
            <PaneButton>
              <CollapseIcon />
            </PaneButton>
            <PaneButton>
              <FullscreenIcon />
            </PaneButton>
          </PaneTools>
        </Pane>
        <Axis>
          <Ticks $top={-13.3}>
            {prices.map((p) => (
              <Tick key={p} $h={PRICE_STEP}>
                {p.toFixed(3)}
              </Tick>
            ))}
          </Ticks>
        </Axis>
        <UnitButton>
          JPY
          <ChevronIcon color="#50535e" w={7} />
        </UnitButton>
        <LastPriceTag>
          130.118
          <Countdown>13:45:58</Countdown>
        </LastPriceTag>
        <CursorTag>
          <CursorPlus>
            <PlusCircleIcon size={15} color="#fff" />
          </CursorPlus>
          <CursorPrice>114.337</CursorPrice>
        </CursorTag>
      </Row>
      <Row $h={71} $line="#131722">
        <Gutter />
        <Pane>
          <RsiPaneChart />
        </Pane>
        <Axis>
          <Tick $h={10}>100.000</Tick>
          <Tick $h={65}>0.000</Tick>
        </Axis>
      </Row>
      <Row $h={88} $line="#131722">
        <Gutter>
          <Ticks $top={-8.5}>
            <Tick $h={35.5}>100.00</Tick>
            <Tick $h={35.5}>50.00</Tick>
            <Tick $h={35.5}>0.00</Tick>
          </Ticks>
        </Gutter>
        <Pane>
          <StochPaneChart />
          <Collapsed>
            <Collapse $pad={5}>
              <ChevronIcon color="#131722" />2
            </Collapse>
          </Collapsed>
        </Pane>
        <Axis>
          <Ticks $top={7}>
            <Tick $h={34}>80.00</Tick>
            <Tick $h={34}>40.00</Tick>
          </Ticks>
        </Axis>
      </Row>
      <Row $h={28} $line="#787b86">
        <CornerCell $side="left">
          <RoundLetter>Z</RoundLetter>
        </CornerCell>
        <TimeTrack>
          {months.map((m) => (
            <TimeTick key={m.label} $gap={m.gap} $bold={m.bold}>
              {m.label}
            </TimeTick>
          ))}
          <DateTag>09 Aug '22</DateTag>
        </TimeTrack>
        <CornerCell $side="right">
          <RoundLetter>A</RoundLetter>
        </CornerCell>
      </Row>
    </ChartArea>
  </Page>
);

export default App;
